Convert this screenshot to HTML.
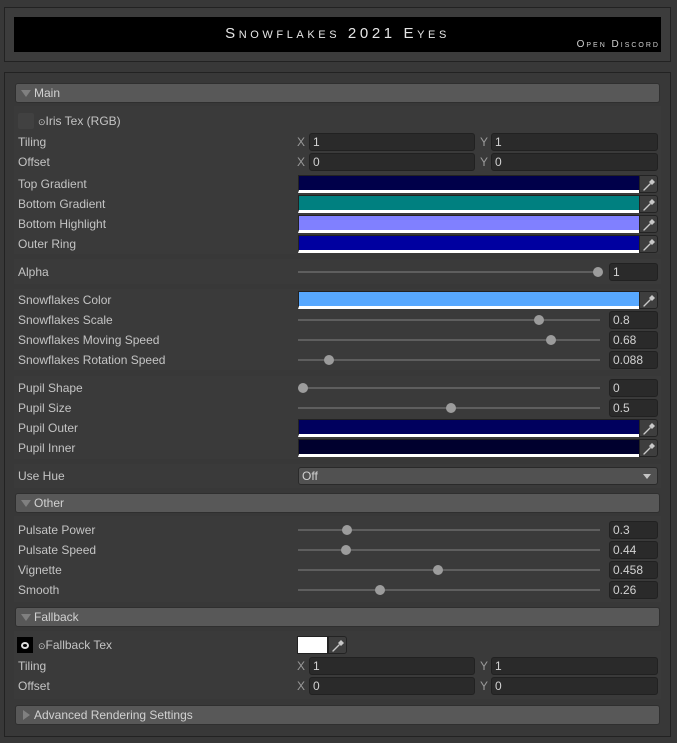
<!DOCTYPE html>
<html><head><meta charset="utf-8"><style>
*{box-sizing:border-box;margin:0;padding:0}
html{background:#383838}
body{width:677px;height:742px;background:#383838;font-family:"Liberation Sans",sans-serif;font-size:12px;color:#c4c4c4;position:relative;top:1px;overflow:hidden}
div{position:absolute}
.l{left:18px;line-height:16px;white-space:nowrap}
.hdr{left:15px;width:645px;height:20px;background:#585858;border:1px solid #2f2f2f;border-radius:3px;line-height:18px;padding-left:18px;color:#d2d2d2}
.hdr:before{content:"";position:absolute;left:5px;top:6px;border-left:5px solid transparent;border-right:5px solid transparent;border-top:7px solid #808080}
.hdr.c:before{left:7px;top:4px;border-top:5px solid transparent;border-bottom:5px solid transparent;border-left:7px solid #808080;border-right:0}
.grp{left:14px;width:647px;background:#3a3a3a}
.fld{height:18px;background:#2a2a2a;border:1px solid #212121;border-radius:3px;line-height:16px;padding-left:3px;color:#d2d2d2}
.xy{color:#9a9a9a;line-height:16px}
.col{left:298px;width:342px;height:18px;border:1px solid #222;border-bottom:3px solid #fff}
.eye{left:639px;width:19px;height:18px;background:#3e3e3e;border:1px solid #232323;border-radius:0 3px 3px 0}
.trk{left:298px;height:2px;background:#5e5e5e}
.th{width:10px;height:10px;border-radius:50%;background:#9c9c9c}
</style></head><body>
<div style="left:4px;top:6px;width:667px;height:55px;background:#3c3c3c;border:1px solid #222"></div>
<div style="left:14px;top:16px;width:647px;height:35px;background:#000"></div>
<div style="left:14px;top:24px;width:647px;text-align:center;color:#e6e6e6;font-size:15px;font-variant:small-caps;letter-spacing:3.6px;line-height:18px">Snowflakes 2021 Eyes</div>
<div style="right:17px;top:38px;color:#d0d0d0;font-size:10px;font-variant:small-caps;letter-spacing:2px;line-height:12px">Open Discord</div>

<div style="left:4px;top:71px;width:667px;height:665px;background:#383838;border:1px solid #222"></div>

<div class="hdr" style="top:82px">Main</div>
<div class="grp" style="top:105px;height:148px"></div>
<div class="grp" style="top:258px;height:25px"></div>
<div class="grp" style="top:288px;height:81px"></div>
<div class="grp" style="top:375px;height:83px"></div>
<div class="grp" style="top:463px;height:24px"></div>

<div style="left:18px;top:112px;width:16px;height:16px;background:#414141;border-radius:2px"></div>
<div class="l" style="left:38px;top:112px"><span style="font-size:9px">⊙</span>Iris Tex (RGB)</div>
<div class="l" style="top:133px">Tiling</div>
<div class="l" style="top:153px">Offset</div>
<div class="xy" style="left:297px;top:133px">X</div><div class="fld" style="left:309px;top:132px;width:166px">1</div>
<div class="xy" style="left:480px;top:133px">Y</div><div class="fld" style="left:491px;top:132px;width:167px">1</div>
<div class="xy" style="left:297px;top:153px">X</div><div class="fld" style="left:309px;top:152px;width:166px">0</div>
<div class="xy" style="left:480px;top:153px">Y</div><div class="fld" style="left:491px;top:152px;width:167px">0</div>

<div class="l" style="top:175px">Top Gradient</div>
<div class="l" style="top:195px">Bottom Gradient</div>
<div class="l" style="top:215px">Bottom Highlight</div>
<div class="l" style="top:235px">Outer Ring</div>
<div class="col" style="top:174px;background:#00004a"></div>
<div class="col" style="top:194px;background:#008080"></div>
<div class="col" style="top:214px;background:#8080ff"></div>
<div class="col" style="top:234px;background:#0000a0"></div>

<div class="l" style="top:263px">Alpha</div>
<div class="trk" style="top:270px;width:300px"></div><div class="th" style="left:593px;top:266px"></div>
<div class="fld" style="left:609px;top:262px;width:49px">1</div>

<div class="l" style="top:291px">Snowflakes Color</div>
<div class="col" style="top:290px;background:#57a8ff"></div>
<div class="l" style="top:311px">Snowflakes Scale</div>
<div class="l" style="top:331px">Snowflakes Moving Speed</div>
<div class="l" style="top:351px">Snowflakes Rotation Speed</div>
<div class="trk" style="top:318px;width:302px"></div><div class="th" style="left:534px;top:314px"></div><div class="fld" style="left:609px;top:310px;width:49px">0.8</div>
<div class="trk" style="top:338px;width:302px"></div><div class="th" style="left:546px;top:334px"></div><div class="fld" style="left:609px;top:330px;width:49px">0.68</div>
<div class="trk" style="top:358px;width:302px"></div><div class="th" style="left:324px;top:354px"></div><div class="fld" style="left:609px;top:350px;width:49px">0.088</div>

<div class="l" style="top:379px">Pupil Shape</div>
<div class="l" style="top:399px">Pupil Size</div>
<div class="l" style="top:419px">Pupil Outer</div>
<div class="l" style="top:439px">Pupil Inner</div>
<div class="trk" style="top:386px;width:302px"></div><div class="th" style="left:298px;top:382px"></div><div class="fld" style="left:609px;top:378px;width:49px">0</div>
<div class="trk" style="top:406px;width:302px"></div><div class="th" style="left:446px;top:402px"></div><div class="fld" style="left:609px;top:398px;width:49px">0.5</div>
<div class="col" style="top:418px;background:#00005e"></div>
<div class="col" style="top:438px;background:#00002e"></div>

<div class="l" style="top:467px">Use Hue</div>
<div class="fld" style="left:298px;top:466px;width:360px;background:#515151;border-color:#2a2a2a">Off</div>
<div style="left:643px;top:473px;border-left:4px solid transparent;border-right:4px solid transparent;border-top:5px solid #c4c4c4"></div>

<div class="hdr" style="top:492px">Other</div>
<div class="grp" style="top:515px;height:86px"></div>
<div class="l" style="top:521px">Pulsate Power</div>
<div class="l" style="top:541px">Pulsate Speed</div>
<div class="l" style="top:561px">Vignette</div>
<div class="l" style="top:581px">Smooth</div>
<div class="trk" style="top:528px;width:302px"></div><div class="th" style="left:342px;top:524px"></div><div class="fld" style="left:609px;top:520px;width:49px">0.3</div>
<div class="trk" style="top:548px;width:302px"></div><div class="th" style="left:341px;top:544px"></div><div class="fld" style="left:609px;top:540px;width:49px">0.44</div>
<div class="trk" style="top:568px;width:302px"></div><div class="th" style="left:433px;top:564px"></div><div class="fld" style="left:609px;top:560px;width:49px">0.458</div>
<div class="trk" style="top:588px;width:302px"></div><div class="th" style="left:375px;top:584px"></div><div class="fld" style="left:609px;top:580px;width:49px">0.26</div>

<div class="hdr" style="top:606px">Fallback</div>
<div class="grp" style="top:630px;height:68px"></div>
<div style="left:17px;top:636px;width:16px;height:16px;background:#000"><div style="left:4px;top:5px;width:8px;height:7px;border-radius:50%;background:#ddd"></div><div style="left:6px;top:7px;width:4px;height:3px;background:#000;border-radius:50%"></div></div>
<div class="l" style="left:38px;top:636px"><span style="font-size:9px">⊙</span>Fallback Tex</div>
<div style="left:297px;top:635px;width:31px;height:18px;background:#fff;border:1px solid #222"></div>
<div class="eye" style="left:328px;top:635px"></div>
<div class="l" style="top:657px">Tiling</div>
<div class="l" style="top:677px">Offset</div>
<div class="xy" style="left:297px;top:657px">X</div><div class="fld" style="left:309px;top:656px;width:166px">1</div>
<div class="xy" style="left:480px;top:657px">Y</div><div class="fld" style="left:491px;top:656px;width:167px">1</div>
<div class="xy" style="left:297px;top:677px">X</div><div class="fld" style="left:309px;top:676px;width:166px">0</div>
<div class="xy" style="left:480px;top:677px">Y</div><div class="fld" style="left:491px;top:676px;width:167px">0</div>

<div class="hdr c" style="top:704px">Advanced Rendering Settings</div>

<div class="eye" style="top:174px"></div>
<div class="eye" style="top:194px"></div>
<div class="eye" style="top:214px"></div>
<div class="eye" style="top:234px"></div>
<div class="eye" style="top:290px"></div>
<div class="eye" style="top:418px"></div>
<div class="eye" style="top:438px"></div>
<svg width="677" height="742" style="position:absolute;left:0;top:0" stroke-linecap="round">
<g id="e"><path d="M644 189 L650 183" stroke="#c8c8c8" stroke-width="1.4" fill="none"/><path d="M649 181 L652 178 L655 181 L652 184 Z" fill="#c8c8c8"/></g>
<use href="#e" y="20"/><use href="#e" y="40"/><use href="#e" y="60"/><use href="#e" y="116"/><use href="#e" y="244"/><use href="#e" y="264"/>
<use href="#e" x="-311" y="461"/>
</svg>
</body></html>
